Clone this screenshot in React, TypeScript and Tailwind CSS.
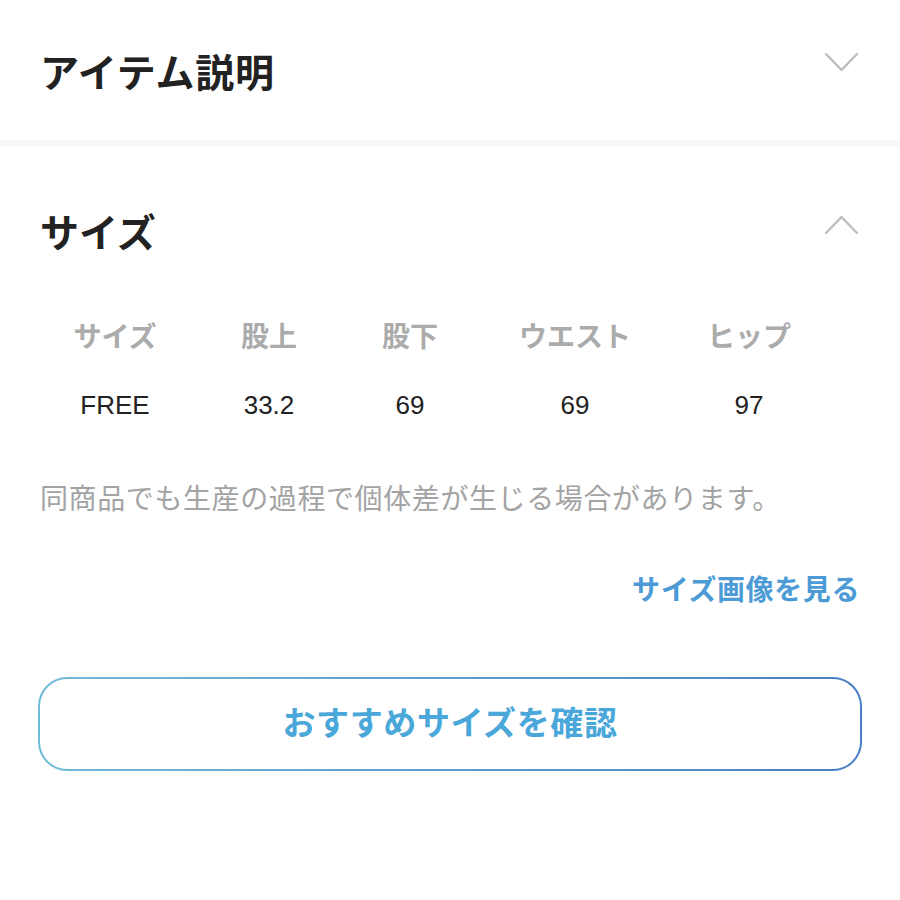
import React from "react";

const FONT = "font-['Liberation_Sans','Noto_Sans_CJK_JP',sans-serif]";

function Chevron({ up }: { up?: boolean }) {
  return (
    <svg width="35" height="21" viewBox="0 0 35 21" fill="none">
      <polyline
        points={up ? "2,19 17.5,3 33,19" : "2,2 17.5,18 33,2"}
        stroke="#bdbdbd"
        strokeWidth="2.4"
        strokeLinecap="round"
        strokeLinejoin="round"
      />
    </svg>
  );
}

export default function App() {
  const headers = ["サイズ", "股上", "股下", "ウエスト", "ヒップ"];
  const values = ["FREE", "33.2", "69", "69", "97"];
  return (
    <div className={`w-[900px] h-[900px] bg-white ${FONT}`}>
      <div className="h-[140px] flex items-start justify-between pl-10 pr-[41px]">
        <h2 className="mt-[51px] text-[39px] leading-[46px] font-bold text-[#222] tracking-[0.8px]">アイテム説明</h2>
        <div className="mt-[52px]">
          <Chevron />
        </div>
      </div>
      <div className="h-[6px] bg-[#f7f7f7]" />
      <div className="px-10">
        <div className="flex items-start justify-between pr-px">
          <h2 className="mt-[65px] text-[39px] leading-[46px] font-bold text-[#222]">サイズ</h2>
          <div className="mt-[68px]">
            <Chevron up />
          </div>
        </div>
        <div className="mt-[61px] grid grid-cols-[150px_158px_124px_206px_142px] text-center">
          {headers.map((h) => (
            <div key={h} className="text-[28px] leading-[40px] font-bold text-[#ababab]">
              {h}
            </div>
          ))}
        </div>
        <div className="mt-[27px] grid grid-cols-[150px_158px_124px_206px_142px] text-center">
          {values.map((v, i) => (
            <div key={i} className="text-[26px] leading-[40px] text-[#222]">
              {v}
            </div>
          ))}
        </div>
        <p className="mt-[55px] text-[28px] leading-[40px] text-[#a3a3a3] tracking-[0.6px]">
          同商品でも生産の過程で個体差が生じる場合があります。
        </p>
        <div className="mt-[51px] flex justify-end">
          <span className="text-[28px] leading-[40px] font-bold text-[#4d9bd6] tracking-[0.6px]">サイズ画像を見る</span>
        </div>
        <div className="mt-[66px] -mx-[2px] rounded-[29px] p-[2px] bg-linear-to-r from-[#6fbcd8] to-[#4b7fc4]">
          <div className="h-[90px] rounded-[27px] bg-white flex items-center justify-center">
            <span className="text-[33px] leading-[44px] font-bold text-[#4aa7d9] tracking-[0.6px]">
              おすすめサイズを確認
            </span>
          </div>
        </div>
      </div>
    </div>
  );
}
